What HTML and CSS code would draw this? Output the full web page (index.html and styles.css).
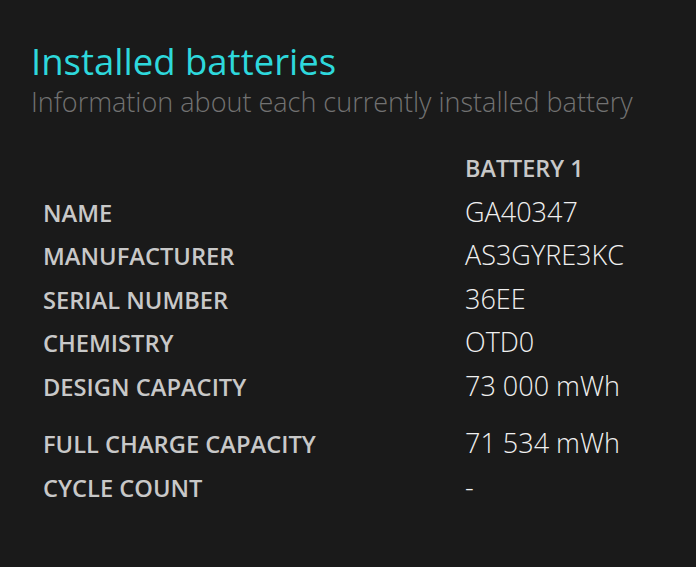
FILE: index.html
```html
<!DOCTYPE html>
<html lang="en">
<head>
<meta charset="utf-8">
<title>Installed batteries</title>
<link rel="stylesheet" href="styles.css">
</head>
<body>
<main class="page">
  <header class="head">
    <h1 class="title">Installed batteries</h1>
    <p class="subtitle">Information about each currently installed battery</p>
  </header>
  <div class="table">
    <div class="row header-row"><span class="label"></span><span class="col-head">BATTERY 1</span></div>
    <div class="row"><span class="label">NAME</span><span class="value">GA40347</span></div>
    <div class="row"><span class="label">MANUFACTURER</span><span class="value">AS3GYRE3KC</span></div>
    <div class="row"><span class="label">SERIAL NUMBER</span><span class="value">36EE</span></div>
    <div class="row"><span class="label">CHEMISTRY</span><span class="value">OTD0</span></div>
    <div class="row"><span class="label">DESIGN CAPACITY</span><span class="value">73 000 mWh</span></div>
    <div class="row spaced"><span class="label">FULL CHARGE CAPACITY</span><span class="value">71 534 mWh</span></div>
    <div class="row"><span class="label">CYCLE COUNT</span><span class="value">-</span></div>
  </div>
</main>
</body>
</html>
```
FILE: styles.css
```css
html, body {
  margin: 0;
  padding: 0;
  background: #1a1a1a;
}
body {
  width: 696px;
  height: 567px;
  overflow: hidden;
  font-family: "Open Sans", "Noto Sans", sans-serif;
}
.page {
  padding: 38px 0 0 31px;
}
.title {
  margin: 0;
  font-size: 36.5px;
  font-weight: 400;
  line-height: 46px;
  color: #2ed8dc;
}
.subtitle {
  margin: 0;
  font-size: 27px;
  font-weight: 300;
  line-height: 36px;
  color: #727272;
}
.table {
  margin-top: 32px;
  padding-left: 12px;
}
.row {
  display: grid;
  grid-template-columns: 422px 1fr;
  align-items: baseline;
  height: 43.5px;
}
.header-row {
  height: 40.5px;
}
.spaced {
  margin-top: 14px;
}
.label {
  font-size: 23.7px;
  font-weight: 600;
  color: #c8c8c8;
}
.col-head {
  font-size: 23.4px;
  font-weight: 600;
  color: #c8c8c8;
}
.value {
  font-size: 27px;
  font-weight: 300;
  color: #f0f0f0;
}
```
